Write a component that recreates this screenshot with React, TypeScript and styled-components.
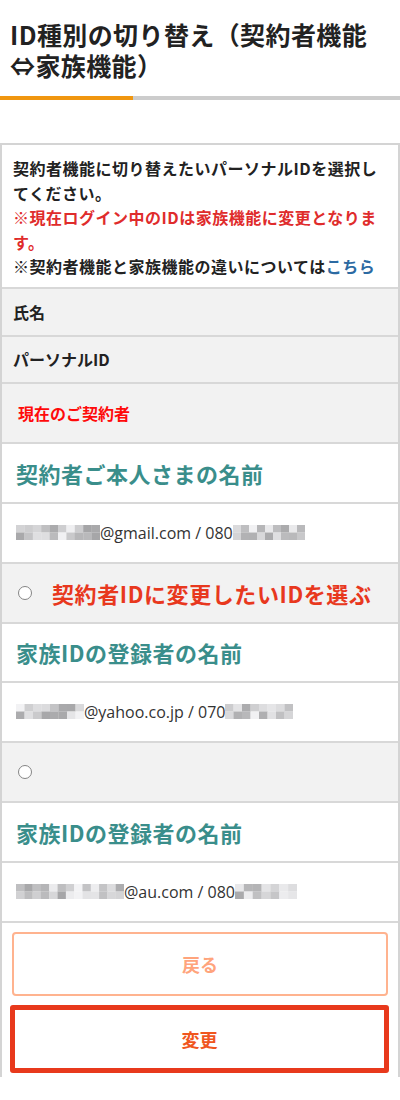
import React from "react";
import styled, { createGlobalStyle } from "styled-components";

const GlobalStyle = createGlobalStyle`
  html, body { margin: 0; padding: 0; background: #fff; }
  body { font-family: "Noto Sans CJK JP", "Noto Sans", sans-serif; color: #222; }
  * { box-sizing: border-box; }
`;

const Page = styled.div`
  width: 400px;
  display: flex;
  flex-direction: column;
`;

const Title = styled.h1`
  margin: 0;
  padding: 19px 20px 0 10px;
  font-size: 25px;
  line-height: 31px;
  font-weight: 700;
  letter-spacing: 0.4px;
  color: #222;
`;

const Progress = styled.div`
  margin-top: 15px;
  height: 4px;
  background: #cccccc;
  display: flex;
`;

const ProgressFill = styled.div<{ $pct: number }>`
  width: ${(p) => p.$pct}%;
  background: #f0960f;
`;

const Box = styled.div`
  margin-top: 43px;
  border: 2px solid #d4d4d4;
  border-bottom: none;
  display: flex;
  flex-direction: column;
`;

const Intro = styled.div`
  padding: 11px 17px 8px 11px;
  font-size: 16px;
  line-height: 24.5px;
  font-weight: 700;
  letter-spacing: 0.5px;
  color: #222;
`;

const Warn = styled.span`
  color: #df2c2c;
`;

const Link = styled.a`
  color: #2c6aa2;
  text-decoration: none;
`;

const Row = styled.div<{ $h: number; $grey?: boolean; $pl?: number }>`
  height: ${(p) => p.$h + 2}px;
  border-top: 2px solid #d8d8d8;
  background: ${(p) => (p.$grey ? "#f2f2f2" : "#fff")};
  display: flex;
  align-items: center;
  padding-left: ${(p) => p.$pl ?? 11}px;
`;

const Label = styled.span`
  font-size: 16px;
  font-weight: 700;
  color: #222;
`;

const Current = styled.span`
  font-size: 16px;
  font-weight: 700;
  color: #ff0a0a;
`;

const Name = styled.span`
  font-size: 22px;
  font-weight: 700;
  letter-spacing: 0.5px;
  color: #3a8e8b;
`;

const Email = styled.div`
  display: flex;
  align-items: center;
  font-family: "Open Sans", "Noto Sans", sans-serif;
  font-size: 16px;
  color: #333;
`;

const Radio = styled.span`
  width: 14px;
  height: 14px;
  border: 1.5px solid #858585;
  border-radius: 50%;
  background: #fff;
  flex: none;
`;

const Choose = styled.span`
  margin-left: 20px;
  font-size: 22px;
  font-weight: 700;
  letter-spacing: 0.6px;
  color: #e8381e;
`;

const Buttons = styled.div`
  border-top: 2px solid #d8d8d8;
  padding: 9px 10px 4px;
  display: flex;
  flex-direction: column;
  gap: 9px;
`;

const Button = styled.button<{ $primary?: boolean }>`
  font-family: "Noto Sans CJK JP", sans-serif;
  font-weight: 700;
  font-size: 18px;
  background: #fff;
  cursor: pointer;
  ${(p) =>
    p.$primary
      ? `height: 68px; margin: 0 -1px 0 -2px; border: 5px solid #e8391c; border-radius: 3px; color: #f0561e;`
      : `height: 64px; border: 2px solid #ffb38f; border-radius: 4px; color: #ffa47c;`}
`;

function shade(seed: number, i: number) {
  const x = Math.sin(seed * 97.3 + i * 12.9898) * 43758.5453;
  const r = x - Math.floor(x);
  const v = Math.round(165 + r * 78);
  return `rgb(${v},${v},${v + 2})`;
}

const Mosaic: React.FC<{ width: number; seed: number }> = ({ width, seed }) => {
  const cols = Math.max(1, Math.round(width / 8.3));
  const cw = width / cols;
  const rects = [];
  for (let r = 0; r < 2; r++) {
    for (let c = 0; c < cols; c++) {
      rects.push(
        <rect key={`${r}-${c}`} x={c * cw} y={r * 7.5} width={cw + 0.2} height={7.6} fill={shade(seed, r * cols + c)} />
      );
    }
  }
  return (
    <svg width={width} height={15} viewBox={`0 0 ${width} 15`} style={{ display: "block" }}>
      {rects}
    </svg>
  );
};

const EmailRow: React.FC<{ pre: number; text: string; post: number; seed: number }> = ({ pre, text, post, seed }) => (
  <Row $h={58} $pl={14}>
    <Email>
      <Mosaic width={pre} seed={seed} />
      <span>{text}</span>
      <Mosaic width={post} seed={seed + 5} />
    </Email>
  </Row>
);

export default function App() {
  return (
    <Page>
      <GlobalStyle />
      <Title>ID種別の切り替え（契約者機能⇔家族機能）</Title>
      <Progress>
        <ProgressFill $pct={33.3} />
      </Progress>
      <Box>
        <Intro>
          契約者機能に切り替えたいパーソナルIDを選択してください。
          <br />
          <Warn>※現在ログイン中のIDは家族機能に変更となります。</Warn>
          <br />
          ※契約者機能と家族機能の違いについては<Link href="#">こちら</Link>
        </Intro>
        <Row $h={46} $grey>
          <Label>氏名</Label>
        </Row>
        <Row $h={45} $grey>
          <Label>パーソナルID</Label>
        </Row>
        <Row $h={58} $grey $pl={16}>
          <Current>現在のご契約者</Current>
        </Row>
        <Row $h={58} $pl={14}>
          <Name>契約者ご本人さまの名前</Name>
        </Row>
        <EmailRow pre={84} text="@gmail.com / 080" post={72} seed={1} />
        <Row $h={58} $grey $pl={16}>
          <Radio />
          <Choose>契約者IDに変更したいIDを選ぶ</Choose>
        </Row>
        <Row $h={57} $pl={14}>
          <Name>家族IDの登録者の名前</Name>
        </Row>
        <EmailRow pre={68} text="@yahoo.co.jp / 070" post={68} seed={2} />
        <Row $h={58} $grey $pl={16}>
          <Radio />
        </Row>
        <Row $h={58} $pl={14}>
          <Name>家族IDの登録者の名前</Name>
        </Row>
        <EmailRow pre={108} text="@au.com / 080" post={62} seed={3} />
        <Buttons>
          <Button>戻る</Button>
          <Button $primary>変更</Button>
        </Buttons>
      </Box>
    </Page>
  );
}
